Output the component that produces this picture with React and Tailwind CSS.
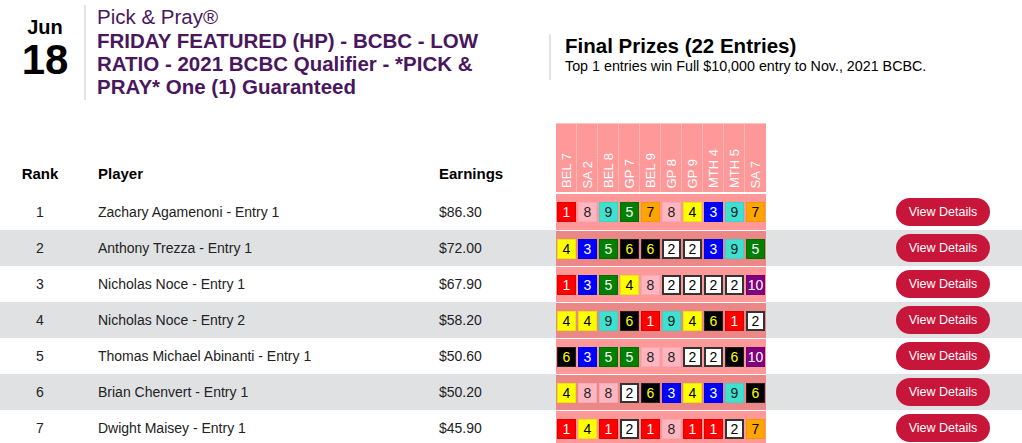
import React from "react";

const tracks = ["BEL 7", "SA 2", "BEL 8", "GP 7", "BEL 9", "GP 8", "GP 9", "MTH 4", "MTH 5", "SA 7"];

const rows = [
  { rank: 1, name: "Zachary Agamenoni - Entry 1", earn: "$86.30", picks: [1, 8, 9, 5, 7, 8, 4, 3, 9, 7] },
  { rank: 2, name: "Anthony Trezza - Entry 1", earn: "$72.00", picks: [4, 3, 5, 6, 6, 2, 2, 3, 9, 5] },
  { rank: 3, name: "Nicholas Noce - Entry 1", earn: "$67.90", picks: [1, 3, 5, 4, 8, 2, 2, 2, 2, 10] },
  { rank: 4, name: "Nicholas Noce - Entry 2", earn: "$58.20", picks: [4, 4, 9, 6, 1, 9, 4, 6, 1, 2] },
  { rank: 5, name: "Thomas Michael Abinanti - Entry 1", earn: "$50.60", picks: [6, 3, 5, 5, 8, 8, 2, 2, 6, 10] },
  { rank: 6, name: "Brian Chenvert - Entry 1", earn: "$50.20", picks: [4, 8, 8, 2, 6, 3, 4, 3, 9, 6] },
  { rank: 7, name: "Dwight Maisey - Entry 1", earn: "$45.90", picks: [1, 4, 1, 2, 1, 8, 1, 1, 2, 7] },
];

const colors = {
  1: "bg-[#ff0000] text-white border border-[#e00000]",
  2: "bg-white text-black border-2 border-[#333333]",
  3: "bg-[#0000ff] text-white border border-[#0000e0]",
  4: "bg-[#ffff00] text-black border border-[#e8e800]",
  5: "bg-[#008000] text-white border border-[#006f00]",
  6: "bg-black text-[#ffff00] border border-[#222222]",
  7: "bg-[#ffa500] text-black border border-[#f09a00]",
  8: "bg-[#ffb6c1] text-[#222] border border-[#f5aab6]",
  9: "bg-[#40e0d0] text-[#222] border border-[#38d4c4]",
  10: "bg-[#800080] text-white border border-[#700070]",
};

const grid = "grid grid-cols-[80px_359px_117px_210px_1fr]";

export default function App() {
  return (
    <div className="w-[1022px] h-[443px] overflow-hidden bg-white font-['Liberation_Sans',Arial,sans-serif] text-[#222]">
      {/* Top header */}
      <div className="flex items-start h-[100px] pt-[5px]">
        <div className="w-[84px] pt-[11px] pl-[6px] text-center text-black font-bold">
          <div className="text-[20px] leading-[22px]">Jun</div>
          <div className="text-[42px] leading-[44px]">18</div>
        </div>
        <div className="w-[465px] h-[95px] border-l-2 border-[#e3e3e3] pl-[11px] pr-[22px] text-[#4a175e]">
          <div className="text-[20.5px] leading-[24px]">Pick &amp; Pray®</div>
          <div className="text-[20.5px] leading-[23px] font-bold">
            FRIDAY FEATURED (HP) - BCBC - LOW RATIO - 2021 BCBC Qualifier - *PICK &amp; PRAY* One (1) Guaranteed
          </div>
        </div>
        <div className="mt-[29px] border-l-2 border-[#e3e3e3] pl-[14px] pb-[5px] text-black">
          <div className="text-[20.5px] leading-[23px] font-bold">Final Prizes (22 Entries)</div>
          <div className="text-[14.3px] leading-[18px]">Top 1 entries win Full $10,000 entry to Nov., 2021 BCBC.</div>
        </div>
      </div>

      {/* Table */}
      <div className="mt-[23px]">
        <div className={`${grid} h-[71px] text-[15px] font-bold text-black`}>
          <div className="flex items-end justify-center pb-[9px]">Rank</div>
          <div className="flex items-end pl-[18px] pb-[9px]">Player</div>
          <div className="flex items-end pb-[9px]">Earnings</div>
          <div className="h-[69px] flex bg-[rgba(255,0,0,0.4)] border-t border-white/40">
            {tracks.map((t) => (
              <div key={t} className="w-[21px] flex items-end justify-center pb-[4px] border-r border-white/30 last:border-r-0">
                <span className="[writing-mode:vertical-rl] rotate-180 text-white text-[13px] font-normal leading-[15px] whitespace-nowrap">
                  {t}
                </span>
              </div>
            ))}
          </div>
          <div />
        </div>

        {rows.map((r, i) => (
          <div key={r.rank} className={`${grid} h-[36px] text-[14px] ${i % 2 === 1 ? "bg-[#e0e1e3]" : "bg-white"}`}>
            <div className="flex items-center justify-center">{r.rank}</div>
            <div className="flex items-center pl-[18px]">{r.name}</div>
            <div className="flex items-center">{r.earn}</div>
            <div className={`flex items-center bg-[rgba(255,0,0,0.4)] ${i > 0 ? "border-t border-white" : ""}`}>
              {r.picks.map((p, j) => (
                <div key={j} className="w-[21px] flex justify-center">
                  <div className={`w-[19px] h-[20px] flex items-center justify-center text-[14px] leading-none ${colors[p]}`}>
                    {p}
                  </div>
                </div>
              ))}
            </div>
            <div className="flex items-center justify-end pr-[32px]">
              <button className="w-[94px] h-[28px] rounded-full bg-[#c8153a] text-white text-[12.5px] leading-none">
                View Details
              </button>
            </div>
          </div>
        ))}
      </div>
    </div>
  );
}
